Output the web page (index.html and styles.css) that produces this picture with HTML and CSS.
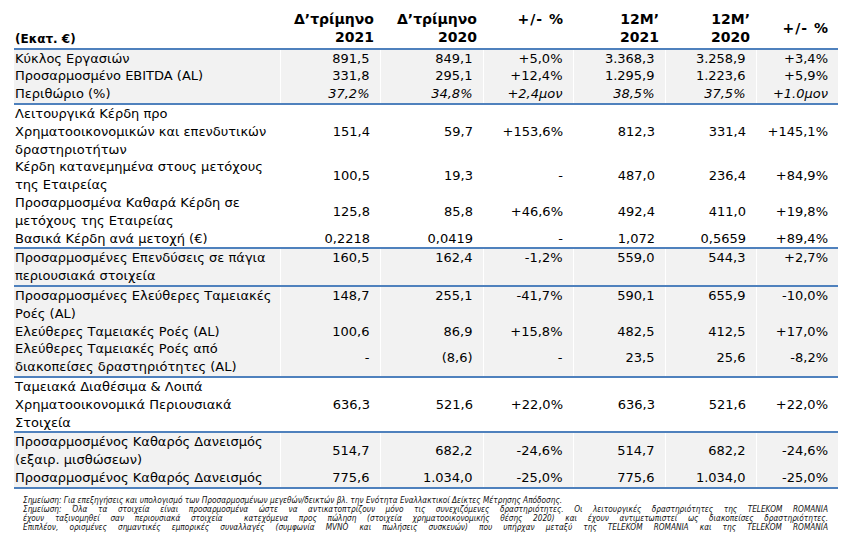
FILE: index.html
```html
<!DOCTYPE html>
<html lang="el">
<head>
    <meta charset="UTF-8">
    <title>Βασικά οικονομικά μεγέθη</title>
    <link rel="stylesheet" href="styles.css">
</head>
<body>

    <!-- Results table -->
    <table class="results">
        <colgroup>
            <col class="c-label">
            <col class="c-q21">
            <col class="c-q20">
            <col class="c-qd">
            <col class="c-y21">
            <col class="c-y20">
            <col class="c-yd">
        </colgroup>
        <thead>
            <tr>
                <th class="unit">(Εκατ. €)</th>
                <th>Δ’τρίμηνο<br>2021</th>
                <th>Δ’τρίμηνο<br>2020</th>
                <th class="diff top">+/- %</th>
                <th>12M’<br>2021</th>
                <th>12M’<br>2020</th>
                <th class="diff mid">+/- %</th>
            </tr>
        </thead>
        <tbody class="shade">
            <tr>
                <td>Κύκλος Εργασιών</td>
                <td>891,5</td><td>849,1</td><td>+5,0%</td><td>3.368,3</td><td>3.258,9</td><td>+3,4%</td>
            </tr>
            <tr>
                <td>Προσαρμοσμένο EBITDA (AL)</td>
                <td>331,8</td><td>295,1</td><td>+12,4%</td><td>1.295,9</td><td>1.223,6</td><td>+5,9%</td>
            </tr>
            <tr class="margin">
                <td>Περιθώριο (%)</td>
                <td>37,2%</td><td>34,8%</td><td>+2,4μον</td><td>38,5%</td><td>37,5%</td><td>+1.0μον</td>
            </tr>
        </tbody>
        <tbody>
            <tr>
                <td>Λειτουργικά Κέρδη προ<br>Χρηματοοικονομικών και επενδυτικών<br>δραστηριοτήτων</td>
                <td>151,4</td><td>59,7</td><td>+153,6%</td><td>812,3</td><td>331,4</td><td>+145,1%</td>
            </tr>
            <tr>
                <td>Κέρδη κατανεμημένα στους μετόχους<br>της Εταιρείας</td>
                <td>100,5</td><td>19,3</td><td>-</td><td>487,0</td><td>236,4</td><td>+84,9%</td>
            </tr>
            <tr>
                <td>Προσαρμοσμένα Καθαρά Κέρδη σε<br>μετόχους της Εταιρείας</td>
                <td>125,8</td><td>85,8</td><td>+46,6%</td><td>492,4</td><td>411,0</td><td>+19,8%</td>
            </tr>
            <tr>
                <td>Βασικά Κέρδη ανά μετοχή (€)</td>
                <td>0,2218</td><td>0,0419</td><td>-</td><td>1,072</td><td>0,5659</td><td>+89,4%</td>
            </tr>
        </tbody>
        <tbody class="shade">
            <tr class="top">
                <td>Προσαρμοσμένες Επενδύσεις σε πάγια<br>περιουσιακά στοιχεία</td>
                <td>160,5</td><td>162,4</td><td>-1,2%</td><td>559,0</td><td>544,3</td><td>+2,7%</td>
            </tr>
        </tbody>
        <tbody class="shade">
            <tr class="top">
                <td>Προσαρμοσμένες Ελεύθερες Ταμειακές<br>Ροές (AL)</td>
                <td>148,7</td><td>255,1</td><td>-41,7%</td><td>590,1</td><td>655,9</td><td>-10,0%</td>
            </tr>
            <tr>
                <td>Ελεύθερες Ταμειακές Ροές (AL)</td>
                <td>100,6</td><td>86,9</td><td>+15,8%</td><td>482,5</td><td>412,5</td><td>+17,0%</td>
            </tr>
            <tr>
                <td>Ελεύθερες Ταμειακές Ροές από<br>διακοπείσες δραστηριότητες (AL)</td>
                <td>-</td><td>(8,6)</td><td>-</td><td>23,5</td><td>25,6</td><td>-8,2%</td>
            </tr>
        </tbody>
        <tbody>
            <tr>
                <td>Ταμειακά Διαθέσιμα &amp; Λοιπά<br>Χρηματοοικονομικά Περιουσιακά<br>Στοιχεία</td>
                <td>636,3</td><td>521,6</td><td>+22,0%</td><td>636,3</td><td>521,6</td><td>+22,0%</td>
            </tr>
        </tbody>
        <tbody class="shade">
            <tr>
                <td>Προσαρμοσμένος Καθαρός Δανεισμός<br>(εξαιρ. μισθώσεων)</td>
                <td>514,7</td><td>682,2</td><td>-24,6%</td><td>514,7</td><td>682,2</td><td>-24,6%</td>
            </tr>
            <tr>
                <td>Προσαρμοσμένος Καθαρός Δανεισμός</td>
                <td>775,6</td><td>1.034,0</td><td>-25,0%</td><td>775,6</td><td>1.034,0</td><td>-25,0%</td>
            </tr>
        </tbody>
    </table>

    <!-- Notes -->
    <div class="notes">
        <p class="first">Σημείωση: Για επεξηγήσεις και υπολογισμό των Προσαρμοσμένων μεγεθών/δεικτών βλ. την Ενότητα Εναλλακτικοί Δείκτες Μέτρησης Απόδοσης.</p>
        <p>Σημείωση: Όλα τα στοιχεία είναι προσαρμοσμένα ώστε να αντικατοπτρίζουν μόνο τις συνεχιζόμενες δραστηριότητες. Οι λειτουργικές δραστηριότητες της TELEKOM ROMANIA</p>
        <p>έχουν ταξινομηθεί σαν περιουσιακά στοιχεία &nbsp;κατεχόμενα προς πώληση (στοιχεία χρηματοοικονομικής θέσης 2020) και έχουν αντιμετωπιστεί ως διακοπείσες δραστηριότητες.</p>
        <p>Επιπλέον, ορισμένες σημαντικές εμπορικές συναλλαγές (συμφωνία MVNO και πωλήσεις συσκευών) που υπήρχαν μεταξύ της TELEKOM ROMANIA και της TELEKOM ROMANIA</p>
    </div>

</body>
</html>
```

FILE: styles.css
```css
body {
    font-family: "DejaVu Sans", sans-serif;
    color: #000;
    background: #fff;
    margin: 0;
    padding: 11px 8px 0 14px;
}

/* Table */
.results {
    width: 824px;
    border-collapse: collapse;
    table-layout: fixed;
    font-size: 13px;
}

.c-label { width: 266px; }
.c-q21 { width: 100px; }
.c-q20 { width: 103px; }
.c-qd { width: 90px; }
.c-y21 { width: 92px; }
.c-y20 { width: 91px; }
.c-yd { width: 82px; }

.results th,
.results td {
    padding: 0 10px 0 0;
    line-height: 17.8px;
    text-align: right;
    vertical-align: middle;
    white-space: nowrap;
}

.results td:first-child,
.results th:first-child {
    text-align: left;
    padding-left: 1px;
}

/* Header */
.results thead th {
    font-size: 14px;
    font-weight: bold;
    vertical-align: bottom;
    padding-right: 6px;
    padding-bottom: 1px;
    border-bottom: 2px solid #4f81bd;
}

.results thead th.unit {
    font-size: 12px;
    line-height: 15px;
}

.results thead th.diff {
    letter-spacing: 1px;
    padding-right: 9px;
}

.results thead th.top {
    vertical-align: top;
}

.results thead th.mid {
    vertical-align: middle;
}

/* Row groups */
.results tbody tr:last-child td {
    border-bottom: 2px solid #4f81bd;
}

.shade td {
    background-color: #f2f2f2;
}

.shade td + td {
    border-left: 1px solid #fff;
}

tr.top td {
    vertical-align: top;
}

tr.margin td + td {
    font-style: italic;
}

/* Notes */
.notes {
    margin: 7px 10px 0 9px;
    font-family: "DejaVu Sans Condensed", "DejaVu Sans", sans-serif;
    font-stretch: condensed;
    font-size: 8.2px;
    font-style: italic;
    color: #111;
}

.notes p {
    margin: 0;
    line-height: 9px;
    white-space: nowrap;
    text-align: justify;
    text-align-last: justify;
}

.notes p.first {
    text-align-last: left;
}
```
